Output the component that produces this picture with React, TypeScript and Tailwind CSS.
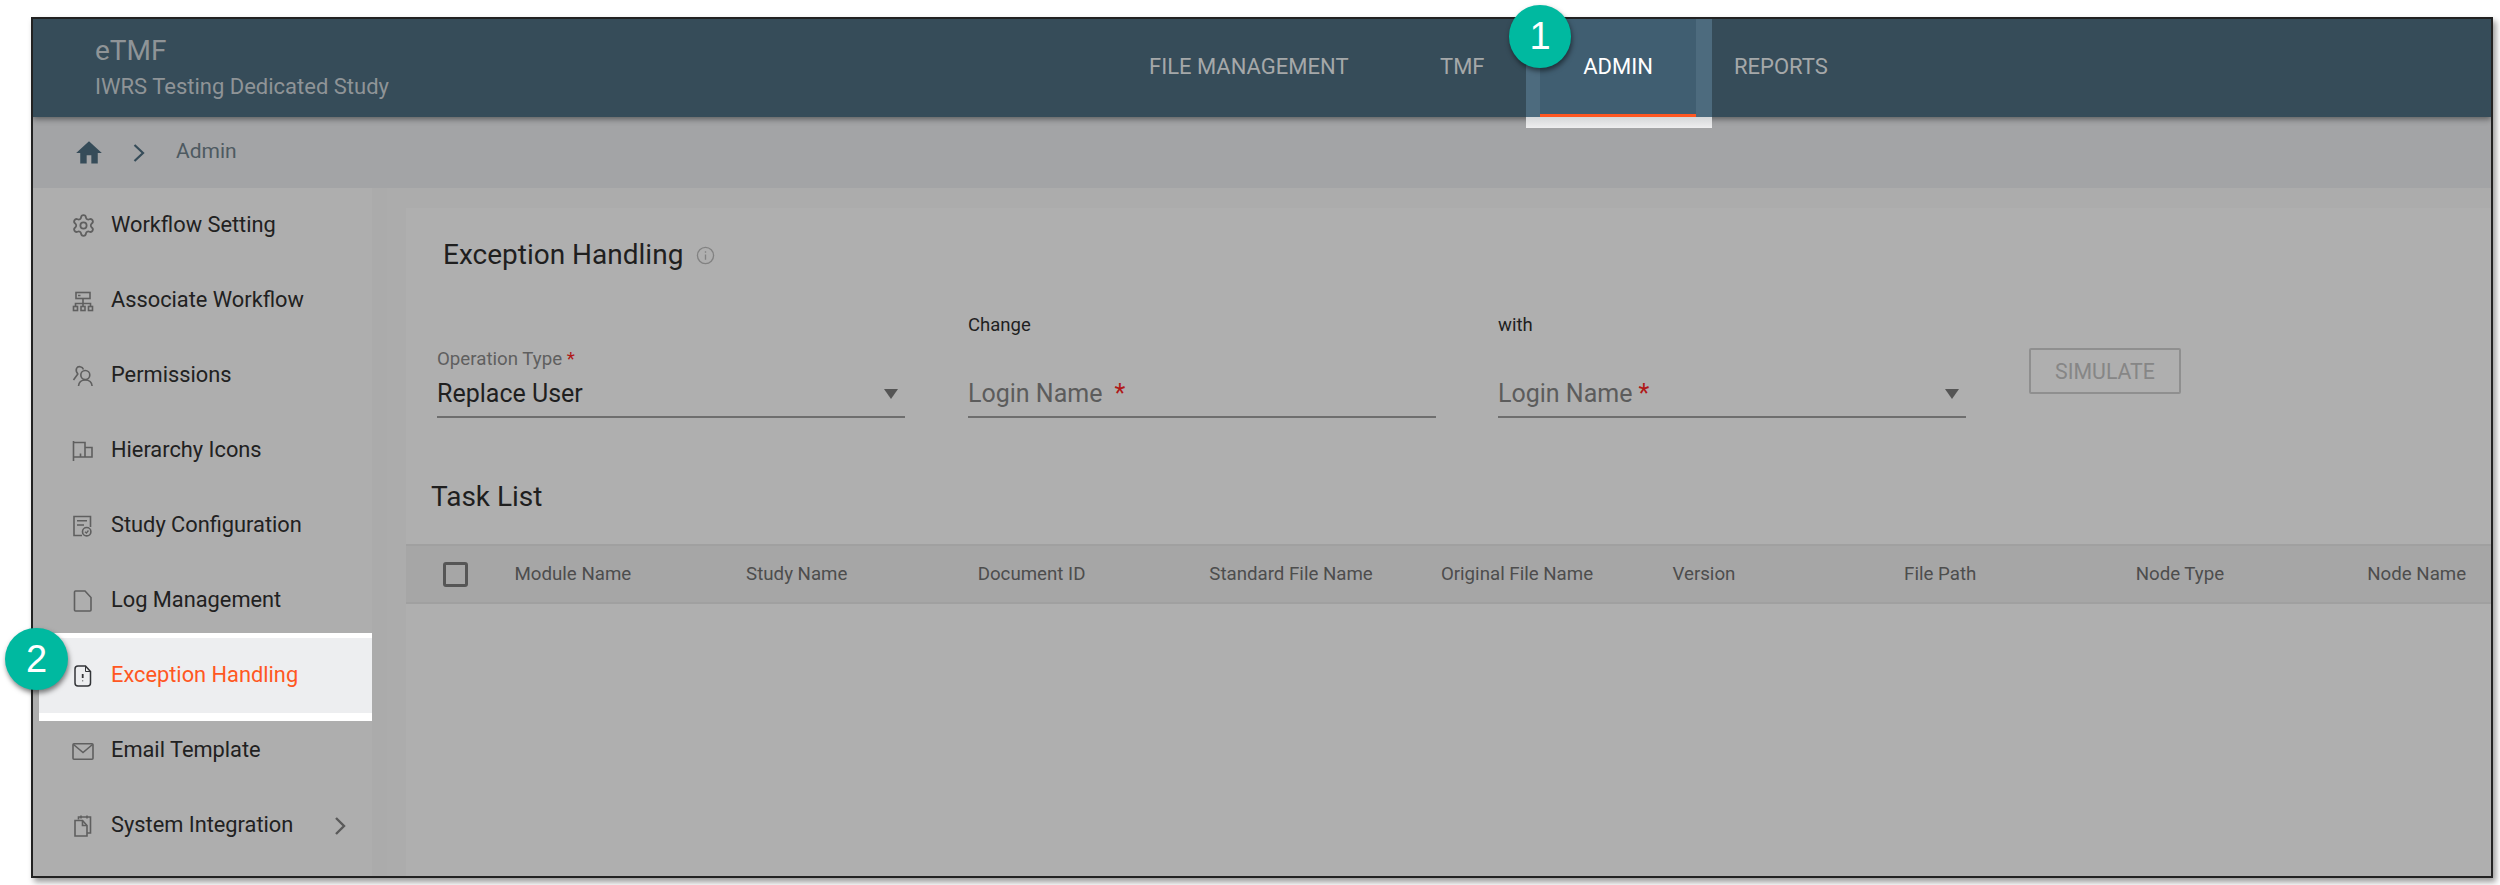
import { Settings } from 'lucide-react';

const columns = ['Module Name', 'Study Name', 'Document ID', 'Standard File Name', 'Original File Name', 'Version', 'File Path', 'Node Type', 'Node Name'];

const iconClass = 'w-[22px] h-[22px] shrink-0';

const NetworkIcon = () => (
  <svg viewBox="0 0 22 22" className={iconClass} fill="none" stroke="#5f5f5f" strokeWidth="1.6">
    <rect x="4" y="2.500" width="14" height="6" />
    <path d="M6 5.500h2.500M11 8.500V16M3.500 16v-2.500h15V16" />
    <rect x="1.500" y="16.500" width="4" height="4" />
    <rect x="9" y="16.500" width="4" height="4" />
    <rect x="16.500" y="16.500" width="4" height="4" />
  </svg>
);

const UsersIcon = () => (
  <svg viewBox="0 0 22 22" className={iconClass} fill="none" stroke="#5f5f5f" strokeWidth="1.6">
    <path d="M11.500 4.500C10.500 1.500 6 .5 4.500 3.500c-.9 2 .2 4 1.300 5.500L1.500 15" />
    <circle cx="13.300" cy="10" r="4.500" />
    <path d="M6.500 21c.4-4 3.200-6 6.800-6s6.400 2 6.800 6" />
  </svg>
);

const FlagsIcon = () => (
  <svg viewBox="0 0 22 22" className={iconClass} fill="none" stroke="#5f5f5f" strokeWidth="1.6">
    <path d="M1.500 1v20M1.500 2.500H13V17" />
    <path d="M13 7.500h7V17H1.500M8.500 17v-3.500" />
  </svg>
);

const ConfigIcon = () => (
  <svg viewBox="0 0 22 22" className={iconClass} fill="none" stroke="#5f5f5f" strokeWidth="1.6">
    <path d="M10 20.500H2v-19h16.500V12" />
    <path d="M5 5.700h10M5 10h7" />
    <circle cx="14.700" cy="16.700" r="4.200" />
    <path d="M13 16.800l1.400 1.300 2-2.600" strokeWidth="1.300" />
  </svg>
);

const FileIcon = () => (
  <svg viewBox="0 0 22 22" className={iconClass} fill="none" stroke="#5f5f5f" strokeWidth="1.6">
    <path d="M3.500 1H13l6 6.500V20q0 1-1 1H3.500q-1 0-1-1V2q0-1 1-1z" />
  </svg>
);

const FileAlertIcon = () => (
  <svg viewBox="0 0 22 22" className={iconClass} fill="none" stroke="#333538" strokeWidth="1.500">
    <path d="M6 1h7.500l5 5.500V18q0 3-3 3H6q-3 0-3-3V4q0-3 3-3z" />
    <path d="M13.500 1v5.500h5" strokeWidth="1" />
    <path d="M10.700 9v4" strokeWidth="1.800" />
    <path d="M10.700 15v1.500" strokeWidth="1" stroke="#777" />
  </svg>
);

const MailIcon = () => (
  <svg viewBox="0 0 22 22" className={iconClass} fill="none" stroke="#5f5f5f" strokeWidth="1.6">
    <rect x="1" y="3.700" width="20" height="15.500" rx="1" />
    <path d="M1.500 4.500l9.500 8 9.500-8" />
  </svg>
);

const CopyIcon = () => (
  <svg viewBox="0 0 22 22" className={iconClass} fill="none" stroke="#5f5f5f" strokeWidth="1.6">
    <path d="M6.500 4.500V2h12v16h-3.500" />
    <path d="M3 5.500h7.500l4.500 5V21H3z" />
    <path d="M10.500 5.500v5h4.500M9 .5v3M15 .5v3" />
  </svg>
);

const menu = [
  { label: 'Workflow Setting', icon: <Settings className="w-[25px] h-[25px] shrink-0 -mx-[1.500px]" color="#5f5f5f" strokeWidth={1.7} /> },
  { label: 'Associate Workflow', icon: <NetworkIcon /> },
  { label: 'Permissions', icon: <UsersIcon /> },
  { label: 'Hierarchy Icons', icon: <FlagsIcon /> },
  { label: 'Study Configuration', icon: <ConfigIcon /> },
  { label: 'Log Management', icon: <FileIcon /> },
  { label: 'Exception Handling', icon: <FileAlertIcon />, active: true },
  { label: 'Email Template', icon: <MailIcon /> },
  { label: 'System Integration', icon: <CopyIcon />, more: true },
];

const Caret = () => (
  <svg viewBox="0 0 14 10" className="w-[14px] h-[10px]">
    <path d="M0 0h14L7 10z" fill="#555" />
  </svg>
);

const App = () => {
  return (
    <div className="relative w-[2500px] h-[885px] overflow-hidden bg-white pl-[31px] pt-[17px] font-['Roboto',sans-serif]">
      <div className="flex flex-col w-[2462px] h-[861px] border-2 border-[#222] bg-[#acacac] shadow-[3px_4px_6px_rgba(0,0,0,0.4)] overflow-hidden">
        {/* top bar */}
        <header className="relative z-10 flex items-start h-[98px] shrink-0 bg-[#364c59] pl-[62px] shadow-[0_2px_6px_rgba(0,0,0,0.45)]">
          <div className="w-[1054px] pt-[12px]">
            <div className="text-[28px] leading-[40px] text-[#8f9497]">eTMF</div>
            <div className="text-[22px] leading-[30px] text-[#8f9497] mt-[1px]">IWRS Testing Dedicated Study</div>
          </div>
          <nav className="flex h-full text-[22px] text-[#a5a8a9]">
            <div className="w-[291px] pt-[33px] leading-[30px]">FILE MANAGEMENT</div>
            <div className="w-[100px] pt-[33px] leading-[30px]">TMF</div>
            <div className="relative w-[156px] bg-[#405e71] pt-[33px] leading-[30px] text-center text-white">
              ADMIN
              <span className="absolute left-[-14px] top-0 w-[14px] h-full bg-[#4d6b7e]" />
              <span className="absolute right-[-16px] top-0 w-[16px] h-full bg-[#4d6b7e]" />
              <span className="absolute left-0 right-0 bottom-0 h-[3px] bg-[#ff5722]" />
              <span className="absolute left-[-14px] right-[-16px] bottom-[-11px] h-[11px] bg-gradient-to-b from-[#d5d7d9] to-[#eeeeef]" />
            </div>
            <div className="ml-[38px] pt-[33px] leading-[30px]">REPORTS</div>
          </nav>
        </header>

        {/* breadcrumb */}
        <div className="flex items-center h-[71px] shrink-0 bg-[#a3a4a6] pl-[42px]">
          <svg viewBox="0 0 24 24" className="w-[28px] h-[28px]">
            <path d="M10 21v-7h4v7h5.500v-9H23L12 2 1 12h3.500v9z" fill="#364c59" />
          </svg>
          <svg viewBox="0 0 12 18" className="w-[12px] h-[18px] ml-[30px]" fill="none" stroke="#364c59" strokeWidth="2.200">
            <path d="M1.500 1l8.500 8-8.500 8" />
          </svg>
          <span className="ml-[31px] mb-[2px] text-[21px] text-[#4e5a61]">Admin</span>
        </div>

        <div className="flex flex-1 min-h-0">
          {/* side menu */}
          <aside className="w-[339px] shrink-0 bg-[#aeaeae]">
            {menu.map((item) =>
              item.active ? (
                <div key={item.label} className="flex items-center h-[88px] -mt-[5px] -mb-[8px] ml-[6px] pl-[33px] gap-[17px] bg-[#edeef0] border-t-[5px] border-b-[8px] border-white relative text-[21.800px] text-[#ff5722]">
                  {item.icon}
                  {item.label}
                </div>
              ) : (
                <div key={item.label} className="flex items-center h-[75px] pl-[39px] gap-[17px] text-[21.800px] text-[#212121]">
                  {item.icon}
                  {item.label}
                  {item.more && (
                    <svg viewBox="0 0 12 18" className="w-[12px] h-[18px] ml-[24px]" fill="none" stroke="#5a5a5a" strokeWidth="2.400">
                      <path d="M2 1l8 8-8 8" />
                    </svg>
                  )}
                </div>
              ),
            )}
          </aside>
          <div className="w-[15px] shrink-0 bg-[#ababab]" />

          {/* main panel */}
          <main className="flex-1 min-w-0 mt-[20px] ml-[19px] bg-[#afafaf] overflow-hidden">
            <div className="flex items-center h-[40px] mt-[27px] pl-[37px]">
              <h1 className="text-[28px] text-[#1f1f1f]">Exception Handling</h1>
              <svg viewBox="0 0 20 20" className="w-[19px] h-[19px] ml-[13px]" fill="none" stroke="#828282" strokeWidth="1.400">
                <circle cx="10" cy="10" r="8.500" />
                <path d="M10 9v5.500M10 5.500v1.500" />
              </svg>
            </div>

            <div className="flex items-end h-[143px] pl-[31px]">
              <div className="w-[468px] flex flex-col">
                <div className="h-[22px] leading-[22px] text-[18.700px] text-[#5f5f5f]">
                  Operation Type <span className="text-[#b01818]">*</span>
                </div>
                <div className="flex items-center justify-between h-[48px] border-b-2 border-[#6e6e6e] pr-[7px] pt-[2px] text-[25px] text-[#1f1f1f]">
                  Replace User
                  <Caret />
                </div>
              </div>
              <div className="w-[468px] ml-[63px] flex flex-col">
                <div className="h-[27px] leading-[27px] mt-[1px] mb-[31px] text-[18.500px] text-[#1f1f1f]">Change</div>
                <div className="flex items-center h-[48px] border-b-2 border-[#6e6e6e] pt-[2px] text-[25px] text-[#5c5c5c]">
                  Login Name<span className="ml-[12px] text-[#b01818]">*</span>
                </div>
              </div>
              <div className="w-[468px] ml-[62px] flex flex-col">
                <div className="h-[27px] leading-[27px] mt-[1px] mb-[31px] text-[18.500px] text-[#1f1f1f]">with</div>
                <div className="flex items-center justify-between h-[48px] border-b-2 border-[#6e6e6e] pr-[7px] pt-[2px] text-[25px] text-[#5c5c5c]">
                  <span>
                    Login Name<span className="ml-[6px] text-[#b01818]">*</span>
                  </span>
                  <Caret />
                </div>
              </div>
              <button className="w-[152px] h-[46px] ml-[63px] mb-[24px] pt-[2px] rounded-[2px] border-2 border-[#8f8f8f] text-[21.300px] text-[#868686]">
                SIMULATE
              </button>
            </div>

            <h2 className="mt-[61px] h-[36px] leading-[36px] pl-[25px] text-[28px] text-[#1f1f1f]">Task List</h2>

            <div className="flex items-center h-[60px] mt-[29px] bg-[#a6a6a6] border-y-2 border-[#a0a0a0] text-[18.700px] text-[#4d4d4d]">
              <div className="w-[108.500px] shrink-0 pl-[37px]">
                <div className="w-[25px] h-[25px] rounded-[3px] border-[3px] border-[#565656]" />
              </div>
              {columns.map((col) => (
                <div key={col} className="w-[231.600px] shrink-0 whitespace-nowrap">
                  {col}
                </div>
              ))}
            </div>
          </main>
        </div>
      </div>

      {/* step markers */}
      <div className="absolute left-[1509px] top-[5px] z-20 flex items-center justify-center w-[62px] h-[63px] rounded-full bg-[#00b9a0] shadow-[1px_3px_5px_rgba(0,0,0,0.5)] font-['Liberation_Sans',sans-serif] text-[38px] text-white">
        1
      </div>
      <div className="absolute left-[5px] top-[628px] z-20 flex items-center justify-center w-[63px] h-[62px] rounded-full bg-[#00b9a0] shadow-[1px_3px_5px_rgba(0,0,0,0.5)] font-['Liberation_Sans',sans-serif] text-[38px] text-white">
        2
      </div>
    </div>
  );
};

export default App;
